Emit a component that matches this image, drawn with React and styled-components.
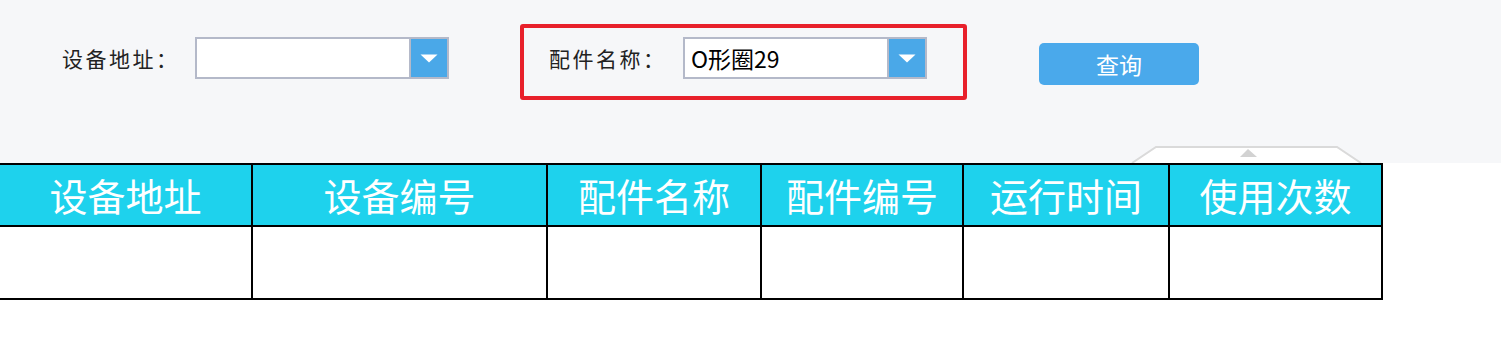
import React from "react";
import styled, { createGlobalStyle } from "styled-components";

const GlobalStyle = createGlobalStyle`
  html, body { margin: 0; padding: 0; background: #ffffff; }
  body { font-family: "Noto Sans CJK SC", "Noto Sans", sans-serif; }
  * { box-sizing: border-box; }
`;

const Page = styled.div`
  width: 1501px;
  background: #ffffff;
`;

const TopBar = styled.div`
  position: relative;
  display: flex;
  align-items: flex-start;
  height: 163px;
  padding-left: 62px;
  background: #f6f7f9;
`;

const Field = styled.div`
  display: flex;
  align-items: center;
  margin-top: ${(p) => p.$top}px;
`;

const Highlight = styled.div`
  display: flex;
  align-items: flex-start;
  width: 447px;
  height: 76px;
  margin-top: 24px;
  margin-left: 71px;
  padding: 9px 0 0 25px;
  border: 4px solid #e8202b;
  border-radius: 3px;
`;

const Label = styled.span`
  width: ${(p) => p.$width}px;
  font-family: "Noto Sans CJK SC", sans-serif;
  font-size: 21px;
  letter-spacing: 2.5px;
  color: #222222;
  line-height: 42px;
  white-space: nowrap;
`;

const Select = styled.div`
  display: flex;
  width: ${(p) => p.$width}px;
  height: 42px;
  border: 2px solid #b4b9c9;
  background: #ffffff;
`;

const SelectValue = styled.div`
  flex: 1;
  padding-left: 6px;
  font-family: "Noto Sans CJK SC", sans-serif;
  font-size: 23px;
  line-height: 39px;
  color: #000000;
  white-space: nowrap;
  overflow: hidden;
`;

const SelectArrow = styled.div`
  display: flex;
  align-items: center;
  justify-content: center;
  width: 38px;
  border-left: 2px solid #b4b9c9;
  background: #4aa8e8;
`;

const QueryButton = styled.button`
  width: 160px;
  height: 42px;
  margin-top: 43px;
  margin-left: 72px;
  padding: 0;
  border: none;
  border-radius: 5px;
  background: #4aa9eb;
  color: #ffffff;
  font-family: "Noto Sans CJK SC", sans-serif;
  font-size: 23px;
  line-height: 42px;
`;

const CollapseTab = styled.svg`
  position: absolute;
  left: 1131px;
  bottom: 0;
`;

const Table = styled.div`
  display: grid;
  grid-template-columns: 253px 295px 214px 202px 206px 213px;
  width: 1383px;
  border-top: 2px solid #000000;
`;

const HeadCell = styled.div`
  height: 62px;
  display: flex;
  align-items: center;
  justify-content: center;
  background: #1ed2ed;
  border-right: 2px solid #000000;
  border-bottom: 2px solid #000000;
  color: #ffffff;
  font-family: "Noto Sans CJK SC", sans-serif;
  font-size: 38px;
  padding-bottom: 2px;
  white-space: nowrap;
`;

const BodyCell = styled.div`
  height: 73px;
  background: #ffffff;
  border-right: 2px solid #000000;
  border-bottom: 2px solid #000000;
`;

const ArrowDown = () => (
  <svg width="18" height="9" viewBox="0 0 18 9">
    <path d="M0.5 0.5 H17.5 L9 8.5 Z" fill="#ffffff" />
  </svg>
);

const columns = ["设备地址", "设备编号", "配件名称", "配件编号", "运行时间", "使用次数"];

export default function App() {
  return (
    <Page>
      <GlobalStyle />
      <TopBar>
        <Field $top={37}>
          <Label $width={133}>设备地址：</Label>
          <Select $width={254}>
            <SelectValue />
            <SelectArrow>
              <ArrowDown />
            </SelectArrow>
          </Select>
        </Field>
        <Highlight>
          <Field $top={0}>
            <Label $width={134}>配件名称：</Label>
            <Select $width={244}>
              <SelectValue>O形圈29</SelectValue>
              <SelectArrow>
                <ArrowDown />
              </SelectArrow>
            </Select>
          </Field>
        </Highlight>
        <QueryButton>查询</QueryButton>
        <CollapseTab width="232" height="17" viewBox="0 0 232 17">
          <path d="M1 17 L25 1 H206 L230 17" fill="#ffffff" stroke="#dadada" strokeWidth="2" />
          <path d="M109 11 L117 3 L126 11 Z" fill="#d2d2d2" />
        </CollapseTab>
      </TopBar>
      <Table>
        {columns.map((c) => (
          <HeadCell key={c}>{c}</HeadCell>
        ))}
        {columns.map((c) => (
          <BodyCell key={c} />
        ))}
      </Table>
    </Page>
  );
}
